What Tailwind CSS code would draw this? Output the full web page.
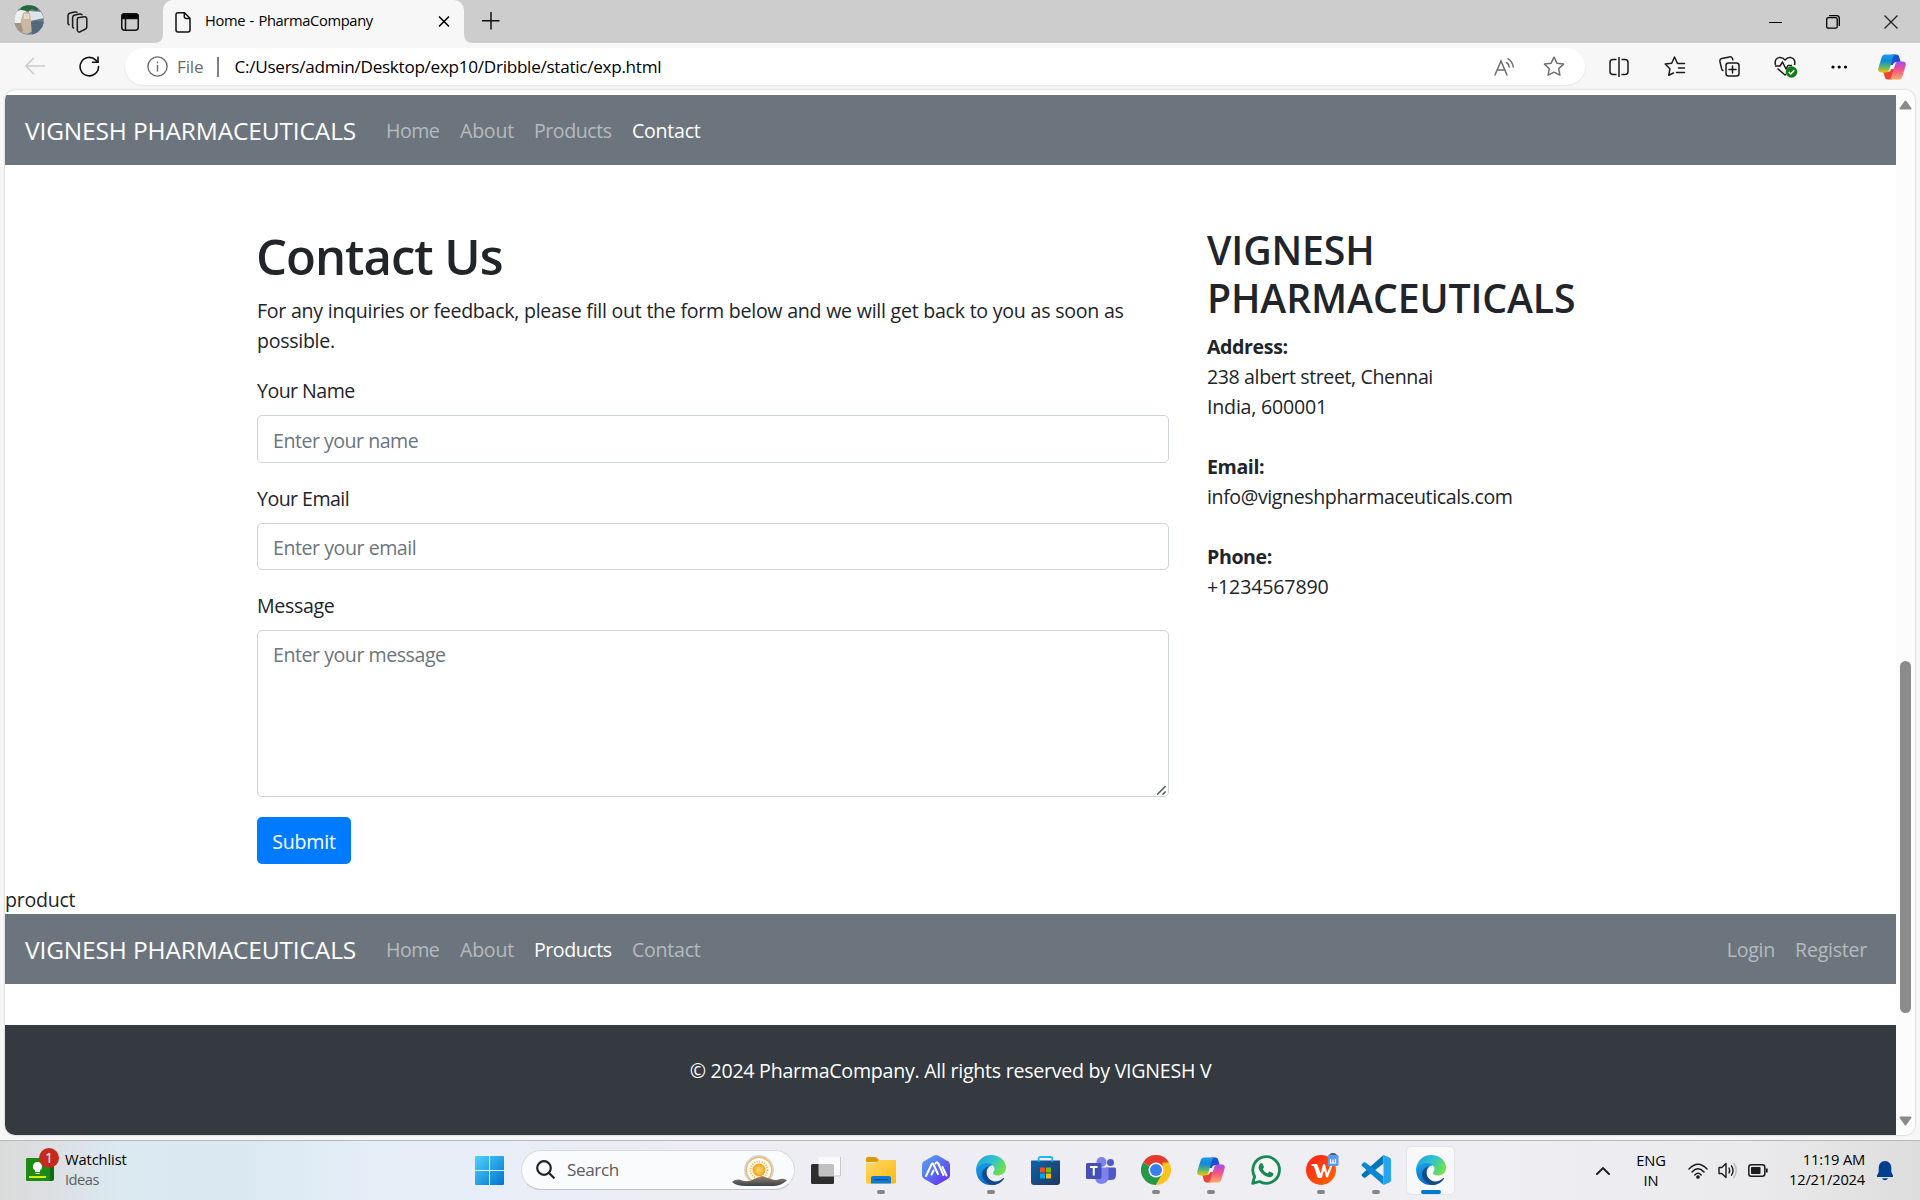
<!DOCTYPE html>
<html lang="en">
<head>
<meta charset="utf-8">
<title>Home - PharmaCompany</title>
<script src="https://cdn.jsdelivr.net/npm/@tailwindcss/browser@4"></script>
</head>
<body class="w-[1920px] h-[1200px] overflow-hidden bg-[#f7f7f7] font-['Open_Sans',sans-serif] text-black flex flex-col">
<svg width="0" height="0" class="absolute">
  <defs>
    <linearGradient id="cpA" x1="0" y1="0" x2="0" y2="1"><stop offset="0" stop-color="#1a9bf0"/><stop offset=".35" stop-color="#1288d8"/><stop offset=".65" stop-color="#4ab37a"/><stop offset="1" stop-color="#f5c400"/></linearGradient>
    <linearGradient id="cpB" x1="0" y1="0" x2="0" y2="1"><stop offset="0" stop-color="#a64bf4"/><stop offset=".45" stop-color="#f0528e"/><stop offset="1" stop-color="#ffa95e"/></linearGradient>
    <linearGradient id="edA" x1="0" y1="0" x2="1" y2=".5"><stop offset="0" stop-color="#1d9fe0"/><stop offset=".55" stop-color="#2fc3cf"/><stop offset="1" stop-color="#6fe04e"/></linearGradient>
    <linearGradient id="edB" x1="0" y1="0" x2=".4" y2="1"><stop offset="0" stop-color="#1aa3e8"/><stop offset="1" stop-color="#0a6fd0"/></linearGradient>
    <linearGradient id="winG" x1="0" y1="0" x2="1" y2="1"><stop offset="0" stop-color="#4fd2fc"/><stop offset="1" stop-color="#0072d0"/></linearGradient>
    <linearGradient id="foldG" x1="0" y1="0" x2="1" y2="1"><stop offset="0" stop-color="#ffd965"/><stop offset="1" stop-color="#fdb912"/></linearGradient>
    <linearGradient id="hexG" x1="0" y1="0" x2="1" y2="1"><stop offset="0" stop-color="#55a8ee"/><stop offset=".5" stop-color="#5a6cf0"/><stop offset="1" stop-color="#6a22f0"/></linearGradient>
    <linearGradient id="storeG" x1="0" y1="0" x2="1" y2="1"><stop offset="0" stop-color="#0c63ad"/><stop offset="1" stop-color="#23355d"/></linearGradient>
    <linearGradient id="wpsG" x1="0" y1="0" x2="1" y2="1"><stop offset="0" stop-color="#ff1d1d"/><stop offset="1" stop-color="#ff6a00"/></linearGradient>
    <radialGradient id="sunG"><stop offset="0" stop-color="#ffe26a"/><stop offset="1" stop-color="#f79a1c"/></radialGradient>
    <linearGradient id="hillG" x1="0" y1="0" x2="0" y2="1"><stop offset="0" stop-color="#a08468"/><stop offset="1" stop-color="#34424f"/></linearGradient>
    <symbol id="copilot" viewBox="0 0 28 26">
      <path d="M14 .5h4.500q2 0 2.600 2l1.600 5.500h-4q-3 0-4 3l-3 0z" fill="#1f4fd0"/>
      <path d="M14 25.500H9.500q-2 0-2.600-2L5.300 18h4q3 0 4-3l3 0z" fill="#e8453a"/>
      <path d="M7 .5h11q-2 0-2.800 2.500l-4 13q-.9 2.500-3.500 2.500H3.500Q-.5 18.500.4 14L3.600 3.500Q4.500.5 7 .5z" fill="url(#cpA)"/>
      <path d="M21 25.500H10.500q2 0 2.800-2.500l4-13Q18 7.500 20.500 7.500H25q3.500 0 2.600 4L24.500 22q-1 3.500-3.500 3.500z" fill="url(#cpB)"/>
    </symbol>
    <symbol id="edge" viewBox="0 0 30 30">
      <path d="M0 14C1 6 7 0 15 0c9 0 15 6 15 12.500 0 5-4 8-8 8-3 0-5-1-5-2.500 0-1 1.500-1.500 1.500-4 0-3-3-5.500-7-5.500C6 8.500 1.500 11 0 14z" fill="url(#edA)"/>
      <path d="M0 14C1.500 10.500 6 8 11 8c2.500 0 4.500.8 5.800 2C13 11 10.500 14 10.500 18c0 6 4.500 10.500 8 11-1 .6-2.500 1-4 1C6.500 30 0 24 0 14z" fill="url(#edB)"/>
      <path d="M12.500 11.500C10 14 9.500 19 12.500 23c3.500 4.500 9.500 4.500 14.500.2.800-.6 1.400 0 .9.700C25.500 27.500 21 30 16.500 30 9 29 4.500 22 6.500 16.500c1-2.700 3.500-4.500 6-5z" fill="#114a8b"/>
    </symbol>
  </defs>
</svg>

<!-- Tab strip -->
<div class="h-[43px] shrink-0 bg-[#cdcdcd] flex items-center">
  <svg class="ml-[14px] -mt-[3px]" width="30" height="30" viewBox="0 0 30 30"><defs><clipPath id="av"><circle cx="15" cy="15" r="14.800"/></clipPath></defs><g clip-path="url(#av)"><rect width="30" height="30" fill="#71808e"/><path d="M0 7l10-3 4 5-3 12-11 5z" fill="#eceef0"/><path d="M6 0h20l-3 6-5-2-4 2-7-1z" fill="#246a36"/><path d="M15 6l12 1 3 6-14 3z" fill="#dfe4e8"/><path d="M9 8q4-2 7 0l1 8 2 10-6 3-8-2 2-12z" fill="#c9b9a2"/><path d="M10 9h5v5h-5z" fill="#e6dac3"/><path d="M0 18l7 0 2 8-4 3-5-3z" fill="#a39482"/><path d="M17 17q8-3 13 0v8l-12 5z" fill="#53687c"/></g></svg>
  <svg class="ml-[22px]" width="23" height="22" viewBox="0 0 23 22" fill="none" stroke="#1b1b1b" stroke-width="1.500" stroke-linejoin="round" stroke-linecap="round"><path d="M11.500 6.500l6.500-.9q2-.2 2.500 1.700v8.500q0 1.400-1.200 2L14 20.500q-2.500 1-3-1.500V8.500q0-1.500.5-2z" transform="translate(.3 .2)"/><path d="M7.500 17l-.9-1V6.500q0-1.500 1.500-2.200L13.500 3q1.500-.3 2.500.6"/><path d="M3 13.800l-1-1V4.500q0-1.500 1.500-2.200L8.500 1q1.500-.3 2.500.4"/></svg>
  <svg class="ml-[32px]" width="18" height="18" viewBox="0 0 18 18" fill="none" stroke="#111" stroke-width="1.500"><rect x=".75" y=".75" width="16.500" height="16.500" rx="3"/><path d="M1 3q0-2 2-2h12q2 0 2 2v2.500H1z" fill="#000"/><path d="M4.500 6v11"/></svg>
  <div class="relative ml-[24px] w-[301px] h-[43px] bg-[#f7f7f7] rounded-t-[10px] flex items-center pb-[2px]">
    <svg class="absolute -left-[9px] bottom-0" width="9" height="9"><path d="M9 0v9H0q9 0 9-9z" fill="#f7f7f7"/></svg>
    <svg class="absolute -right-[9px] bottom-0" width="9" height="9"><path d="M0 0v9h9q-9 0-9-9z" fill="#f7f7f7"/></svg>
    <svg class="ml-[12px] mt-[3px]" width="16" height="21" viewBox="0 0 16 21" fill="none" stroke="#111" stroke-width="1.500" stroke-linejoin="round"><path d="M3 .8h6.500L15 6.300V18q0 2-2 2H3q-2 0-2-2V2.800Q1 .8 3 .8z"/><path d="M9.300 1v3.500q0 2 2 2H15"/></svg>
    <span class="ml-[14px] text-[14.700px] tracking-[-0.350px] [word-spacing:1px] whitespace-nowrap w-[233px]">Home - PharmaCompany</span>
    <svg class="mt-[2px]" width="12" height="11" viewBox="0 0 12 11" stroke="#000" stroke-width="1.500"><path d="M1 .5l10 10M11 .5l-10 10"/></svg>
  </div>
  <svg class="ml-[18px] -mt-[2px]" width="18" height="18" viewBox="0 0 18 18" stroke="#111" stroke-width="1.500"><path d="M9 0v17.500M0 8.700h17.500"/></svg>
  <div class="ml-auto flex items-center gap-[44px] mr-[22px]">
    <svg width="13" height="14" viewBox="0 0 13 14"><path d="M0 7.500h13" stroke="#000" stroke-width="1"/></svg>
    <svg width="14" height="14" viewBox="0 0 14 14" fill="none" stroke="#000" stroke-width="1.300"><rect x=".7" y="2.700" width="10.500" height="10.500" rx="1.500"/><path d="M3 .7h7.500q2.800 0 2.800 2.800V11"/></svg>
    <svg width="14" height="14" viewBox="0 0 14 14" stroke="#222" stroke-width="1.300"><path d="M.5.500l13 13M13.500.5l-13 13"/></svg>
  </div>
</div>

<!-- Address bar -->
<div class="h-[47px] shrink-0 flex items-center">
  <svg class="ml-[25px] -mt-px" width="20" height="18" viewBox="0 0 20 18" fill="none" stroke="#cbcbcb" stroke-width="1.500"><path d="M20 9H1M9 .7L.9 9 9 17.300"/></svg>
  <svg class="ml-[34px]" width="21" height="21" viewBox="0 0 21 21" fill="none" stroke="#111" stroke-width="1.600" stroke-linecap="round"><path d="M19.500 10.500a9.200 9.200 0 1 1-2.700-6.400l2 2"/><path d="M19 1v5.300h-5.500"/></svg>
  <div class="ml-[25px] w-[1460px] h-[37px] bg-white rounded-full shadow-[0_1px_2px_rgba(0,0,0,0.08)] flex items-center">
    <svg class="ml-[22px]" width="21" height="21" viewBox="0 0 21 21" fill="none" stroke="#6b6b6b" stroke-width="1.400"><circle cx="10.500" cy="10.500" r="9.600"/><path d="M10.500 9v6.500M10.500 5.500v1.700"/></svg>
    <span class="ml-[9px] w-[40px] text-[17.150px] text-[#6b6b6b] tracking-[-0.200px]">File</span>
    <span class="w-[1.500px] h-[20px] bg-[#808080]"></span>
    <span class="ml-[16px] text-[17.150px] tracking-[-0.290px] whitespace-nowrap">C:/Users/admin/Desktop/exp10/Dribble/static/exp.html</span>
    <svg class="ml-auto" width="21" height="18" viewBox="0 0 21 18" fill="none" stroke="#6f6f6f" stroke-width="1.500" stroke-linecap="round"><path d="M1 17L7 3l6 14M3 12h8M12.500 4.500q2.500 1.500 2.700 4.500M14 .9q4.500 2.500 5.200 8"/></svg>
    <svg class="ml-[28px] mr-[20px]" width="22" height="21" viewBox="0 0 22 21" fill="none" stroke="#6f6f6f" stroke-width="1.500" stroke-linejoin="round"><path d="M11 1.200l2.900 6 6.600.9-4.800 4.600 1.200 6.500-5.900-3.100-5.900 3.100 1.200-6.500L1.500 8.100l6.600-.9z"/></svg>
  </div>
  <svg class="ml-[24px]" width="21" height="20" viewBox="0 0 21 20" fill="none" stroke="#1b1b1b" stroke-width="1.500"><path d="M7.500 2.500H4q-3 0-3 3v9q0 3 3 3h3.500M12.500 2.500H16q3 0 3 3v9q0 3-3 3h-3.500M10 0v20"/></svg>
  <svg class="ml-[34px]" width="22" height="21" viewBox="0 0 22 21" fill="none" stroke="#1b1b1b" stroke-width="1.500" stroke-linejoin="round" stroke-linecap="round"><path d="M20.500 7.500h-7L10.500 1 7.700 7.200 1.200 8l4.700 4.800-1.200 6.500L9.500 17M14.500 12h6M12.500 16.500h8"/></svg>
  <svg class="ml-[33px]" width="21" height="21" viewBox="0 0 21 21" fill="none" stroke="#1b1b1b" stroke-width="1.500" stroke-linecap="round"><rect x="7" y="7" width="13" height="13" rx="2.500"/><path d="M13.500 10v7M10 13.500h7M4 14.500q-1-.4-1.300-1.500L.9 5.300Q.6 3 2.800 2.500L10.500.9q2-.4 3 1.600l.3 1.300"/></svg>
  <svg class="ml-[34px]" width="24" height="22" viewBox="0 0 24 22" fill="none" stroke="#1b1b1b" stroke-width="1.500" stroke-linejoin="round"><path d="M1.500 9Q0 3 5 1.600 8.500 1 11 4q2.500-3 6-2.400 5 1.400 3.500 7.400M3.500 12.500L11 19l1-1M1 10h5l2.500-4 3.500 7 2-3.500h4"/><circle cx="17.500" cy="16" r="5.800" fill="#117d17" stroke="none"/><path d="M14.800 16l2 2 3.500-3.700" stroke="#fff"/></svg>
  <svg class="ml-[32px]" width="18" height="6" viewBox="0 0 18 6"><circle cx="3" cy="3" r="1.600"/><circle cx="9.200" cy="3" r="1.600"/><circle cx="15.500" cy="3" r="1.600"/></svg>
  <svg class="ml-[30px]" width="28" height="26"><use href="#copilot"/></svg>
</div>

<!-- Page -->
<div class="ml-[5px] w-[1910px] h-[1045px] shrink-0 rounded-[10px] overflow-hidden bg-white shadow-[0_0_2px_rgba(0,0,0,0.3)] flex text-[19.600px] leading-[30px] tracking-[-0.260px] text-[#212529]">
  <div class="w-[1891px] pt-[5px] flex flex-col">
    <nav class="h-[70px] shrink-0 bg-[#6c757d] flex items-center px-5 pt-[2px] text-white/50">
      <span class="w-[331px] mr-5 text-[24.500px] tracking-[-0.150px] text-white whitespace-nowrap">VIGNESH PHARMACEUTICALS</span>
      <span class="w-[74px] pl-[10px] tracking-[-0.500px]">Home</span><span class="w-[74px] pl-[10px]">About</span><span class="w-[97px] pl-[10px] tracking-[-0.460px]">Products</span><span class="pl-[11px] text-white">Contact</span>
    </nav>
    <div class="flex pl-[252px] pt-[61px]">
      <form class="w-[912px]">
        <h1 class="-ml-px text-[49px] leading-[60px] font-semibold tracking-[-1px] mb-[10px]">Contact Us</h1>
        <p class="mb-[20px] whitespace-nowrap tracking-[-0.300px] [word-spacing:0.200px]">For any inquiries or feedback, please fill out the form below and we will get back to you as soon as<br>possible.</p>
        <label class="block tracking-[-0.550px] mb-[9px]">Your Name</label>
        <input class="block w-full h-[48px] px-[15px] pt-[2px] rounded-[5px] border border-[#ced4da] placeholder:text-[#6c757d] tracking-[-0.500px] mb-[21px]" placeholder="Enter your name">
        <label class="block tracking-[-0.550px] mb-[9px]">Your Email</label>
        <input class="block w-full h-[47px] px-[15px] pt-[2px] rounded-[5px] border border-[#ced4da] placeholder:text-[#6c757d] tracking-[-0.460px] mb-[21px]" placeholder="Enter your email">
        <label class="block tracking-[-0.350px] mb-[9px]">Message</label>
        <div class="relative mb-[20px]">
          <textarea class="block w-full h-[167px] px-[15px] py-[9px] rounded-[5px] border border-[#ced4da] placeholder:text-[#6c757d] tracking-[-0.470px] resize-none" placeholder="Enter your message"></textarea>
          <svg class="absolute right-[3px] bottom-[2px]" width="9" height="9" viewBox="0 0 9 9" stroke="#555" stroke-width="1.500"><path d="M0 8.700L8.700 0M5.500 8.700L8.700 5.500"/></svg>
        </div>
        <button type="button" class="block w-[94px] h-[47px] pt-[2px] rounded-[5px] bg-[#007bff] text-white">Submit</button>
      </form>
      <div class="ml-[38px] w-[400px]">
        <h2 class="text-[39.200px] leading-[48px] font-semibold tracking-[-0.100px] mb-[10px]">VIGNESH<br>PHARMACEUTICALS</h2>
        <p class="tracking-[-0.400px]"><b>Address:</b><br>238 albert street, Chennai<br><span class="tracking-[-0.200px]">India, 600001</span><br><br><b>Email:</b><br>info@vigneshpharmaceuticals.com<br><br><b>Phone:</b><br><span class="tracking-[-0.150px]">+1234567890</span></p>
      </div>
    </div>
    <div class="mt-[21px] h-[29px]">product</div>
    <nav class="h-[70px] shrink-0 bg-[#6c757d] flex items-center px-5 pt-[2px] text-white/50">
      <span class="w-[331px] mr-5 text-[24.500px] tracking-[-0.150px] text-white whitespace-nowrap">VIGNESH PHARMACEUTICALS</span>
      <span class="w-[74px] pl-[10px] tracking-[-0.500px]">Home</span><span class="w-[74px] pl-[10px]">About</span><span class="w-[97px] pl-[10px] tracking-[-0.460px] text-white">Products</span><span class="pl-[11px]">Contact</span>
      <span class="ml-auto mr-[20px]">Login</span><span class="mr-[9px]">Register</span>
    </nav>
    <footer class="mt-[41px] h-[110px] bg-[#343a40] text-white text-center pt-[31px]">© 2024 PharmaCompany. All rights reserved by VIGNESH V</footer>
  </div>
  <div class="w-[19px] bg-[#fcfcfc] flex flex-col items-center pt-[10px] pb-[9px]">
    <svg width="13" height="10" viewBox="0 0 13 10"><path d="M6.500 1.500L11.500 8.500H1.500z" fill="#8a8a8a" stroke="#8a8a8a" stroke-width="2" stroke-linejoin="round"/></svg>
    <div class="mt-[551px] w-[11px] h-[352px] rounded-full bg-[#8b8b8b]"></div>
    <svg class="mt-auto" width="13" height="10" viewBox="0 0 13 10"><path d="M6.500 8.500L11.500 1.500H1.500z" fill="#8a8a8a" stroke="#8a8a8a" stroke-width="2" stroke-linejoin="round"/></svg>
  </div>
</div>

<!-- Taskbar -->
<div class="mt-[5px] h-[60px] shrink-0 border-t border-[#b8b8b8] bg-[linear-gradient(90deg,#dadada_0px,#dcdfe2_50px,#dbe9f1_120px,#dae9f1_240px,#e6eef8_380px,#e8eef8_480px,#ededf3_680px,#eeeef3_1500px,#ebebed_1750px,#dddddd_1920px)] flex items-center text-[14.700px] leading-[20px]">
  <div class="relative ml-[26px] w-[28px] h-[24px] -mt-[2px]">
    <svg width="28" height="24" viewBox="0 0 28 24"><rect width="28" height="23" rx="2" fill="#0c6b12"/><rect width="24" height="23" rx="1.500" fill="#1d8a12"/><path d="M11.500 4a4.500 4.500 0 0 0-2.500 8.300V14h5v-1.700A4.500 4.500 0 0 0 11.500 4z" fill="#fff"/><path d="M9.500 15.500h4" stroke="#fff"/><path d="M3 19h17" stroke="#d6f000" stroke-width="2"/></svg>
    <div class="absolute left-[13px] -top-[10px] size-[20px] rounded-full bg-[#c42b1c] text-white text-[14px] leading-[20px] text-center">1</div>
  </div>
  <div class="ml-[11px] w-[410px] -mt-[3px]"><div class="tracking-[-0.100px]">Watchlist</div><div class="text-[#5c6064] tracking-[-0.500px]">Ideas</div></div>
  <svg width="29" height="29" viewBox="0 0 29 29"><path d="M1 0h13v14H0V1q0-1 1-1zM15 0h13q1 0 1 1v13H15zM0 15h14v14H1q-1 0-1-1zM15 15h14v13q0 1-1 1H15z" fill="url(#winG)"/></svg>
  <div class="ml-[17px] w-[274px] h-[40px] -mt-px rounded-full bg-[#fafbfd] border border-[#d9dbe0] border-b-[#c2c4c8] flex items-center text-[17.150px] text-[#5a5a5a]">
    <svg class="ml-[14px] -mt-[2px]" width="19" height="19" viewBox="0 0 19 19" fill="none" stroke="#222" stroke-width="2.200" stroke-linecap="round"><circle cx="8" cy="8" r="6.800"/><path d="M13 13l4.800 4.800"/></svg>
    <span class="ml-[12px] tracking-[-0.400px]">Search</span>
    <svg class="ml-auto mr-[6px]" width="56" height="33" viewBox="0 0 56 33"><circle cx="27" cy="16" r="14" fill="#fffdf5" stroke="#c9dce4" stroke-width="2"/><circle cx="27" cy="16" r="12.700" fill="none" stroke="#f9b668" stroke-width="1.500"/><circle cx="27" cy="16" r="8.500" fill="none" stroke="#f6b23c" stroke-width="2" stroke-dasharray="1 1.500"/><circle cx="27" cy="16" r="6.500" fill="url(#sunG)"/><path d="M0 28q5-4 10-1.500 7 2 12-1.500l8-3 9 3q5 2 9 0 5-1 7 1.500-6 5-13 5.500H14Q4 32 0 28z" fill="url(#hillG)"/></svg>
  </div>
  <div class="ml-[3px] flex items-center h-full -mt-px">
    <div class="w-[55px] flex justify-center"><svg width="30" height="29" viewBox="0 0 30 29"><rect y="8" width="23" height="20" rx="1.500" fill="#2d2d2d"/><rect x="7.500" y="1" width="22" height="19" rx="1" fill="#fff" opacity=".7"/><path d="M8 20h21.500V1" fill="none" stroke="#c9c9c9"/></svg></div>
    <div class="relative w-[55px] h-[59px] flex justify-center items-center"><svg width="30" height="27" viewBox="0 0 30 27"><path d="M0 1.500Q0 0 1.500 0H9q1 0 1.800.8L13 3H28q2 0 2 2H0z" fill="#dc9a06"/><path d="M0 6h10l3-3h15.500Q30 3 30 4.500V25q0 1.500-1.500 1.500h-27Q0 26.500 0 25z" fill="url(#foldG)"/><path d="M5 26.500V21q0-2 2-2h16q2 0 2 2v5.500z" fill="#0f7bd2"/><path d="M8 22.700h14" stroke="#0a4c8a"/></svg><i class="absolute bottom-[6px] w-[8px] h-[4px] rounded-full bg-[#858585]"></i></div>
    <div class="w-[55px] flex justify-center"><svg width="28" height="30" viewBox="0 0 28 30"><path d="M12 .6q2-1.100 4 0l10 5.700q2 1.200 2 3.400v10.600q0 2.200-2 3.400l-10 5.700q-2 1.100-4 0L2 23.700q-2-1.200-2-3.400V9.700q0-2.200 2-3.400z" fill="url(#hexG)"/><path d="M4 21L9.500 9.500q1-1.800 2 0L16 19M9.500 19.500l2-4M13.500 8.500q1.500-2.500 2.800 0L21.500 20M20.500 12l4 8.500" fill="none" stroke="#fff" stroke-width="2" stroke-linecap="round" stroke-linejoin="round"/></svg></div>
    <div class="relative w-[55px] h-[59px] flex justify-center items-center"><svg width="30" height="30"><use href="#edge"/></svg><i class="absolute bottom-[6px] w-[8px] h-[4px] rounded-full bg-[#858585]"></i></div>
    <div class="w-[55px] flex justify-center"><svg width="29" height="29" viewBox="0 0 29 29"><path d="M7.700 7V2.500Q7.700 1 9.500 1h10q1.800 0 1.800 1.500V7" fill="none" stroke="#24b4f0" stroke-width="1.800"/><path d="M0 4.500h29V26q0 3-3 3H3q-3 0-3-3z" fill="url(#storeG)"/><path d="M7.700 4v1.800M21.300 4v1.800" stroke="#24b4f0" stroke-width="1.800"/><path d="M9 11.500h5v5H9z" fill="#f25022"/><path d="M15 11.500h5v5h-5z" fill="#7fba00"/><path d="M9 17.500h5v5H9z" fill="#00a4ef"/><path d="M15 17.500h5v5h-5z" fill="#ffb900"/></svg></div>
    <div class="w-[55px] flex justify-center"><svg width="30" height="27" viewBox="0 0 30 27"><circle cx="15.500" cy="5" r="5" fill="#7b83eb"/><circle cx="24.500" cy="5.500" r="3.500" fill="#5059c9"/><path d="M20 10.500h8.500q1.500 0 1.500 1.500v6q0 5-5 5h-5z" fill="#5059c9"/><path d="M9 10.500h13.500v9q0 7-7 7.500-6.500-.5-6.500-7z" fill="#7b83eb"/><rect y="6" width="15.500" height="16" rx="1.500" fill="#464fb8"/><path d="M4 10h7.500M7.750 10v8.500" stroke="#fff" stroke-width="2"/></svg></div>
    <div class="relative w-[55px] h-[59px] flex justify-center items-center"><svg width="30" height="30" viewBox="0 0 30 30"><path d="M15 15L2 7.500A15 15 0 0 1 28 7.500z" fill="#e33b2e"/><path d="M2 7.500A15 15 0 0 0 15 30l6.500-11.200L15 15z" fill="#279847"/><path d="M28 7.500A15 15 0 0 1 15 30l6.500-11.200V7.500z" fill="#fcc31e"/><circle cx="15" cy="15" r="7.500" fill="#fff"/><circle cx="15" cy="15" r="6" fill="#3b7ded"/></svg><i class="absolute bottom-[6px] w-[8px] h-[4px] rounded-full bg-[#858585]"></i></div>
    <div class="relative w-[55px] h-[59px] flex justify-center items-center"><svg width="28" height="26"><use href="#copilot"/></svg><i class="absolute bottom-[6px] w-[8px] h-[4px] rounded-full bg-[#858585]"></i></div>
    <div class="w-[55px] flex justify-center"><svg width="30" height="30" viewBox="0 0 30 30"><path d="M1.700 28.300l1.900-6.800A13.300 13.300 0 1 1 8.600 26.500z" fill="#f4f7f5" stroke="#178a53" stroke-width="2.800" stroke-linejoin="round"/><path d="M9.500 8.200h1.800l1.800 4-1.500 2q1.800 3 5 4.300l1.800-2 4 1.800q.2 3.500-4 4-4-.2-8-4.200T8 11q.2-2 1.500-2.800z" fill="#178a53"/></svg></div>
    <div class="relative w-[55px] h-[59px] flex justify-center items-center"><svg class="overflow-visible" width="30" height="30" viewBox="0 0 30 30"><circle cx="15" cy="15" r="15" fill="url(#wpsG)"/><path d="M5.500 10h5l4 11 4.500-9.500M8.500 10l4 12h2.500l3-12 3 11.500 4.500-11.500" fill="none" stroke="#fff" stroke-width="2.100" stroke-linejoin="round"/><circle cx="27" cy="3" r="5" fill="#4c5a6b"/><rect x="22" y="0" width="10.500" height="11" rx="1.500" fill="#5b9bf5"/><path d="M24.500 4v4h5V4M27 4.500V8" fill="none" stroke="#fff" stroke-width="1.200"/></svg><i class="absolute bottom-[6px] w-[8px] h-[4px] rounded-full bg-[#858585]"></i></div>
    <div class="relative w-[55px] h-[59px] flex justify-center items-center"><svg width="30" height="30" viewBox="0 0 30 30"><path d="M1 19L22.500 0v8.500L4.500 22.500Q3.300 23.300 2.300 22.300l-1.500-1.500Q0 20 1 19z" fill="#0075b8"/><path d="M1 11l21.500 19v-8.500L4.500 7.500Q3.300 6.700 2.300 7.700L.8 9.200Q0 10 1 11z" fill="#0d87cf"/><path d="M22.500 0L28.500 2.500Q30 3 30 5v20q0 2-1.500 2.500L22.500 30z" fill="#24a4f1"/></svg><i class="absolute bottom-[6px] w-[8px] h-[4px] rounded-full bg-[#858585]"></i></div>
    <div class="relative w-[55px] h-[59px] flex justify-center items-center"><div class="w-[49px] h-[49px] rounded-[5px] bg-[#f8f8fb] border border-[#e3e3e8] flex justify-center items-center"><svg width="30" height="30"><use href="#edge"/></svg></div><i class="absolute bottom-[6px] w-[20px] h-[4px] rounded-full bg-[#0078d4]"></i></div>
  </div>
  <svg class="ml-auto" width="14" height="9" viewBox="0 0 14 9" fill="none" stroke="#1b1b1b" stroke-width="1.900" stroke-linecap="round"><path d="M1 8l6-6 6 6"/></svg>
  <div class="ml-[24px] w-[34px] text-center tracking-[-0.200px] -mt-[2px]">ENG<br>IN</div>
  <svg class="ml-[20px]" width="20" height="16" viewBox="0 0 20 16" fill="none" stroke="#1b1b1b" stroke-width="1.500" stroke-linecap="round"><path d="M1 6q9-9.500 18 0M4 9q6-6.500 12 0M6.800 12q3.200-3.400 6.400 0"/><circle cx="10" cy="14" r="1.100" fill="#1b1b1b"/></svg>
  <svg class="ml-[10px]" width="20" height="17" viewBox="0 0 20 17" fill="none" stroke="#1b1b1b" stroke-width="1.400" stroke-linejoin="round" stroke-linecap="round"><path d="M1 5.500h2.800L8 1.500v14l-4.200-4H1zM11 6q1.500 2.500 0 5M13.500 3.800q3 4.700 0 9.400"/><path d="M16 1.500q4.500 7 0 14" stroke="#bbb"/></svg>
  <svg class="ml-[10px]" width="20" height="13" viewBox="0 0 20 13" fill="none" stroke="#1b1b1b" stroke-width="1.500"><rect x=".8" y=".8" width="16" height="11.400" rx="2.500"/><rect x="3" y="3" width="9.500" height="7" rx=".8" fill="#1b1b1b" stroke="none"/><path d="M18.700 4.500v4" stroke-width="2"/></svg>
  <div class="ml-[16px] w-[81px] text-right tracking-[-0.200px] -mt-[3px]">11:19 AM<br>12/21/2024</div>
  <svg class="ml-[12px] mr-[27px]" width="16" height="20" viewBox="0 0 16 20" fill="#003e92"><path d="M8 0q6 .5 6.300 6.500V11l1.700 3.500V16H0v-1.500L1.700 11V6.500Q2 .5 8 0zM5 17.300h6q-.8 2-3 2t-3-2z"/></svg>
</div>
</body>
</html>
